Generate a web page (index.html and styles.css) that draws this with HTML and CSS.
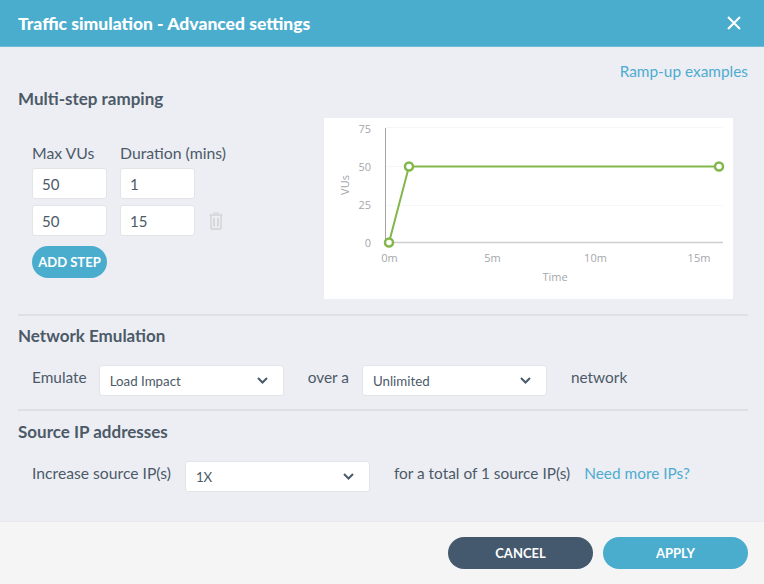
FILE: index.html
```html
<!DOCTYPE html>
<html lang="en">
<head>
    <meta charset="UTF-8">
    <meta name="viewport" content="width=device-width, initial-scale=1.0">
    <title>Traffic simulation - Advanced settings</title>
    <link rel="stylesheet" href="styles.css">
</head>
<body>
    <div class="modal">
        <div class="modal-header">
            <h1>Traffic simulation - Advanced settings</h1>
            <svg class="close-icon" width="16" height="16" viewBox="0 0 16 16">
                <path d="M2 2L14 14M14 2L2 14" stroke="#ffffff" stroke-width="2" fill="none"/>
            </svg>
        </div>

        <div class="modal-body">
            <div class="examples-row">
                <a class="link">Ramp-up examples</a>
            </div>

            <section class="ramping">
                <h2>Multi-step ramping</h2>
                <div class="ramping-content">
                    <div class="steps">
                        <div class="step-labels">
                            <label class="col-label">Max VUs</label>
                            <label class="col-label">Duration (mins)</label>
                        </div>
                        <div class="step-row">
                            <input class="step-input" type="text" value="50">
                            <input class="step-input" type="text" value="1">
                        </div>
                        <div class="step-row">
                            <input class="step-input" type="text" value="50">
                            <input class="step-input" type="text" value="15">
                            <svg class="trash-icon" width="14" height="18" viewBox="0 0 14 18">
                                <path d="M5 2.5V1h4v1.5" stroke="#d0d2d4" stroke-width="1.2" fill="none"/>
                                <path d="M0.5 3h13" stroke="#d0d2d4" stroke-width="1.5"/>
                                <path d="M2 4v12.2c0 .5.4.8.8.8h8.4c.4 0 .8-.3.8-.8V4" stroke="#d0d2d4" stroke-width="1.3" fill="none"/>
                                <path d="M5 6v8.5M9 6v8.5" stroke="#d0d2d4" stroke-width="1.6"/>
                            </svg>
                        </div>
                        <button class="btn-add">ADD STEP</button>
                    </div>

                    <svg class="chart" width="409" height="181" viewBox="0 0 409 181">
                        <rect width="409" height="181" fill="#ffffff"/>
                        <path d="M62 9.5H399M62 48.5H399M62 87.5H399" stroke="#f6f6f7" stroke-width="1"/>
                        <path d="M61.5 10V125" stroke="#a3a3a5" stroke-width="1"/>
                        <path d="M62 124.500H399" stroke="#cdcdd1" stroke-width="1.500"/>
                        <g text-anchor="end">
                            <text x="47" y="15">75</text>
                            <text x="47" y="53">50</text>
                            <text x="47" y="91">25</text>
                            <text x="47" y="129">0</text>
                        </g>
                        <g text-anchor="middle">
                            <text x="65.500" y="143.500">0m</text>
                            <text x="168.500" y="143.500">5m</text>
                            <text x="271.500" y="143.500">10m</text>
                            <text x="375" y="143.500">15m</text>
                            <text x="231" y="163">Time</text>
                            <text transform="translate(25 67) rotate(-90)">VUs</text>
                        </g>
                        <polyline points="65,124.500 85,48.500 395,48.500" fill="none" stroke="#82b74b" stroke-width="2"/>
                        <circle cx="65" cy="124.500" r="4" fill="#ffffff" stroke="#82b74b" stroke-width="2.500"/>
                        <circle cx="85" cy="48.500" r="4" fill="#ffffff" stroke="#82b74b" stroke-width="2.500"/>
                        <circle cx="395" cy="48.500" r="4" fill="#ffffff" stroke="#82b74b" stroke-width="2.500"/>
                    </svg>
                </div>
            </section>

            <section class="network">
                <h2>Network Emulation</h2>
                <div class="option-row">
                    <span class="option-label emulate">Emulate</span>
                    <div class="select">
                        <span>Load Impact</span>
                        <svg width="11" height="7" viewBox="0 0 11 7"><path d="M1 1l4.500 4.500L10 1" stroke="#4a5a6a" stroke-width="2" fill="none"/></svg>
                    </div>
                    <span class="option-label over">over a</span>
                    <div class="select">
                        <span>Unlimited</span>
                        <svg width="11" height="7" viewBox="0 0 11 7"><path d="M1 1l4.500 4.500L10 1" stroke="#4a5a6a" stroke-width="2" fill="none"/></svg>
                    </div>
                    <span class="option-label after">network</span>
                </div>
            </section>

            <section class="source">
                <h2>Source IP addresses</h2>
                <div class="option-row">
                    <span class="option-label increase">Increase source IP(s)</span>
                    <div class="select">
                        <span>1X</span>
                        <svg width="11" height="7" viewBox="0 0 11 7"><path d="M1 1l4.500 4.500L10 1" stroke="#4a5a6a" stroke-width="2" fill="none"/></svg>
                    </div>
                    <span class="option-label after">for a total of 1 source IP(s)</span>
                    <a class="link need-more">Need more IPs?</a>
                </div>
            </section>
        </div>

        <div class="modal-footer">
            <button class="btn btn-cancel">CANCEL</button>
            <button class="btn btn-apply">APPLY</button>
        </div>
    </div>
</body>
</html>
```

FILE: styles.css
```css
* {
    box-sizing: border-box;
}

body {
    margin: 0;
    padding: 0;
    font-family: Lato, "Liberation Sans", sans-serif;
    color: #4c5a68;
    background-color: #edeef3;
}

.modal {
    width: 764px;
    height: 584px;
    display: flex;
    flex-direction: column;
    overflow: hidden;
}

.modal-header {
    height: 47px;
    flex: none;
    background-color: #4badce;
    border-bottom: 1px solid #6fbdd8;
    padding: 0 22px 0 18px;
    display: flex;
    align-items: center;
    justify-content: space-between;
}

.modal-header h1 {
    margin: 0;
    font-size: 17.5px;
    font-weight: 900;
    color: #ffffff;
}

.modal-body {
    flex: 1;
    padding: 16px 16px 0 18px;
}

.examples-row {
    display: flex;
    justify-content: flex-end;
    height: 17px;
    line-height: 17px;
}

.link {
    color: #4dacd0;
    font-size: 15.4px;
}

h2 {
    margin: 0;
    font-size: 17px;
    font-weight: 700;
    line-height: 20px;
    color: #4c5a68;
}

.ramping {
    height: 236px;
    padding-top: 9px;
    border-bottom: 2px solid #dfe0e4;
}

.ramping-content {
    display: flex;
    justify-content: space-between;
    padding: 0 15px 0 14px;
    margin-top: 9px;
}

.steps {
    padding-top: 26px;
}

.step-labels {
    display: flex;
    gap: 13px;
    height: 24px;
}

.col-label {
    width: 75px;
    white-space: nowrap;
    font-size: 15.8px;
    line-height: 18px;
}

.step-row {
    display: flex;
    align-items: center;
    gap: 13px;
    margin-bottom: 6px;
}

.step-input {
    width: 75px;
    height: 31px;
    padding: 0 9px;
    background-color: #ffffff;
    border: 1px solid #e3e4e8;
    border-radius: 3px;
    font-family: Lato, "Liberation Sans", sans-serif;
    font-size: 15px;
    color: #4c5a68;
}

.trash-icon {
    margin-left: 1px;
}

.btn-add {
    display: block;
    width: 75px;
    height: 32px;
    margin-top: 10px;
    padding: 0;
    border: none;
    border-radius: 16px;
    background-color: #4badce;
    color: #ffffff;
    font-family: Lato, "Liberation Sans", sans-serif;
    font-size: 13px;
    font-weight: 700;
}

.chart {
    display: block;
}

text {
    font-family: "Open Sans", sans-serif;
    font-size: 11px;
    fill: #a4a7ab;
}

.network {
    height: 95px;
    padding-top: 10px;
    border-bottom: 2px solid #dfe0e4;
}

.source {
    padding-top: 11px;
}

.option-row {
    display: flex;
    align-items: flex-start;
    padding-left: 14px;
    margin-top: 19px;
}

.option-label {
    font-size: 15.4px;
    line-height: 18px;
    padding-top: 3px;
    white-space: nowrap;
}

.emulate {
    margin-right: 12px;
}

.over {
    margin: 0 13px 0 24px;
}

.after {
    margin-left: 24px;
}

.increase {
    margin-right: 14px;
    font-size: 15.7px;
}

.need-more {
    line-height: 18px;
    padding-top: 3px;
    margin-left: 14px;
}

.select {
    width: 185px;
    height: 31px;
    padding: 0 15px 0 10px;
    display: flex;
    align-items: center;
    justify-content: space-between;
    background-color: #ffffff;
    border: 1px solid #e3e4e8;
    border-radius: 3px;
    font-size: 13.3px;
}

.modal-footer {
    height: 63px;
    flex: none;
    background-color: #f5f5f5;
    border-top: 1px solid #e8e9ed;
    padding: 15px 16px 0 0;
    display: flex;
    justify-content: flex-end;
    gap: 10px;
}

.btn {
    width: 145px;
    height: 32px;
    padding: 0;
    border: none;
    border-radius: 16px;
    color: #ffffff;
    font-family: Lato, "Liberation Sans", sans-serif;
    font-size: 13px;
    font-weight: 700;
}

.btn-cancel {
    background-color: #45596e;
}

.btn-apply {
    background-color: #4badce;
}
```
